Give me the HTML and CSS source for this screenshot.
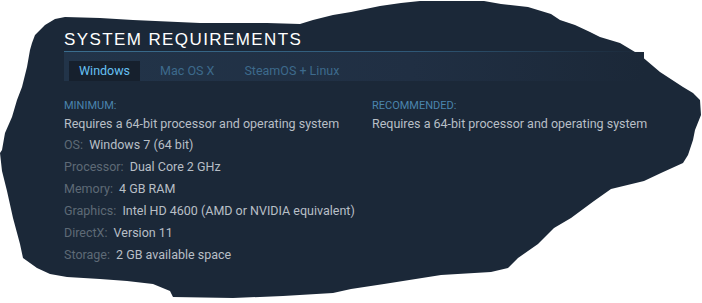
FILE: index.html
```html
<!DOCTYPE html>
<html lang="en">

<head>
    <meta charset="UTF-8">
    <title>System Requirements</title>
    <link rel="stylesheet" href="styles.css">
</head>

<body>

    <div class="stage">
        <svg class="blob" width="702" height="303" viewBox="0 0 702 303">
            <path d="M55 19 L65 17 L100 18 L133 20 L200 23 L267 23 L300 24 L313 20 L333 15 L351 12 L380 6 L401 3 L420 1 L484 1 L501 4 L528 7 L551 14 L560 20 L575 25 L590 32 L600 37 L620 43 L640 55 L660 72 L683 87 L693 93 L700 100 L701 115 L695 130 L693 140 L688 155 L683 163 L661 173 L644 181 L611 189 L594 201 L571 218 L554 228 L538 244 L518 258 L508 268 L491 272 L441 275 L384 284 L351 289 L333 293 L283 296 L233 298 L173 297 L170 291 L153 284 L127 281 L100 279 L67 277 L50 274 L37 268 L23 258 L20 244 L13 218 L7 191 L2 171 L0 153 L2 150 L5 133 L12 117 L17 100 L22 87 L27 67 L30 50 L32 43 L35 35 L45 25 Z" fill="#1b2838"/>
        </svg>

        <div class="sysreq">
            <h2 class="sysreq-title">System Requirements</h2>

            <div class="sysreq-tabs">
                <div class="sysreq-tab active">Windows</div>
                <div class="sysreq-tab">Mac OS X</div>
                <div class="sysreq-tab">SteamOS + Linux</div>
            </div>

            <div class="sysreq-cols">
                <div class="sysreq-col">
                    <div class="sysreq-head">MINIMUM:</div>
                    <div class="sysreq-note">Requires a 64-bit processor and operating system</div>
                    <ul class="sysreq-list">
                        <li><span class="key">OS:</span> Windows 7 (64 bit)</li>
                        <li><span class="key">Processor:</span> Dual Core 2 GHz</li>
                        <li><span class="key">Memory:</span> 4 GB RAM</li>
                        <li><span class="key">Graphics:</span> Intel HD 4600 (AMD or NVIDIA equivalent)</li>
                        <li><span class="key">DirectX:</span> Version 11</li>
                        <li><span class="key">Storage:</span> 2 GB available space</li>
                    </ul>
                </div>
                <div class="sysreq-col">
                    <div class="sysreq-head">RECOMMENDED:</div>
                    <div class="sysreq-note">Requires a 64-bit processor and operating system</div>
                </div>
            </div>
        </div>
    </div>

</body>

</html>
```

FILE: styles.css
```css
body {
    margin: 0;
    padding: 0;
    background-color: white;
    font-family: Roboto, "Liberation Sans", Arial, sans-serif;
}

.stage {
    position: relative;
    width: 702px;
    height: 303px;
    overflow: hidden;
}

/* background shape */
.blob {
    position: absolute;
    top: 0;
    left: 0;
}

.sysreq {
    position: relative;
    width: 580px;
    padding: 30px 0 0 64px;
}

.sysreq-title {
    margin: 0;
    padding-bottom: 1px;
    height: 20px;
    font-family: "Liberation Sans", Arial, sans-serif;
    font-size: 17px;
    line-height: 20px;
    font-weight: normal;
    letter-spacing: 1.4px;
    text-transform: uppercase;
    color: white;
    border-bottom: 1px solid transparent;
    border-image: linear-gradient(90deg, #3b6e8f 0%, #2f5877 60%, rgba(27, 40, 56, 0) 100%) 1;
}

/* Tabs */
.sysreq-tabs {
    display: flex;
    gap: 10px;
    height: 20px;
    padding: 9px 0 0 5px;
    background: linear-gradient(90deg, #223449 0%, #202f43 60%, #1b2838 100%);
}

.sysreq-tab {
    padding: 0 10px;
    font-size: 12.5px;
    line-height: 20px;
    color: #3d6a8c;
}

.sysreq-tab.active {
    background-color: #16202d;
    color: #66c0f4;
}

/* Columns */
.sysreq-cols {
    display: grid;
    grid-template-columns: 308px 1fr;
    margin-top: 16px;
    white-space: nowrap;
}

.sysreq-head {
    font-size: 11px;
    line-height: 17px;
    color: #4a84ad;
}

.sysreq-note {
    font-size: 12.5px;
    line-height: 20px;
    color: #b8bfc6;
}

.sysreq-list {
    list-style: none;
    margin: 0;
    padding: 0;
}

.sysreq-list li {
    font-size: 12.5px;
    line-height: 22px;
    color: #b8bfc6;
}

.key {
    color: #5e6a76;
    margin-right: 3px;
}
```
